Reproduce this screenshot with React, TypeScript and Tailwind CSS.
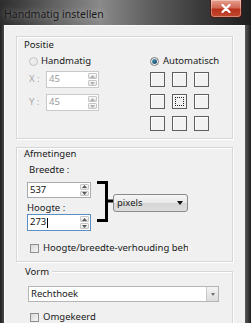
import React from "react";

function Arrow({ up, color = "#5a5a5a" }: { up?: boolean; color?: string }) {
  return (
    <svg width="5" height="3" viewBox="0 0 5 3">
      <path d={up ? "M0 3 L2.5 0 L5 3 Z" : "M0 0 L5 0 L2.5 3 Z"} fill={color} />
    </svg>
  );
}

function SpinInput({
  value,
  disabled,
  focused,
  width,
  height,
}: {
  value: string;
  disabled?: boolean;
  focused?: boolean;
  width: number;
  height: number;
}) {
  return (
    <div
      className={`flex items-stretch bg-white border ${
        focused ? "border-[#5b8fc4]" : disabled ? "border-[#c9c9c9]" : "border-[#a9abb0]"
      }`}
      style={{ width, height }}
    >
      <div
        className={`flex-1 flex items-center pl-[2px] text-[9.5px] ${
          disabled ? "text-[#9a9a9a]" : "text-[#111]"
        }`}
      >
        {value}
        {focused && <span className="w-[1px] h-[10px] bg-black ml-[1px]" />}
      </div>
      <div className="flex flex-col w-[10px] gap-[1px] py-[1px] pr-[1px]">
        <div className="flex-1 border border-[#c6c6c6] rounded-[1px] bg-gradient-to-b from-[#fbfbfb] to-[#e3e3e3] flex items-center justify-center">
          <Arrow up color={disabled ? "#b0b0b0" : "#5a5a5a"} />
        </div>
        <div className="flex-1 border border-[#c6c6c6] rounded-[1px] bg-gradient-to-b from-[#fbfbfb] to-[#e3e3e3] flex items-center justify-center">
          <Arrow color={disabled ? "#b0b0b0" : "#5a5a5a"} />
        </div>
      </div>
    </div>
  );
}

function Radio({ checked, disabled }: { checked?: boolean; disabled?: boolean }) {
  return (
    <div
      className={`shrink-0 w-[9px] h-[9px] rounded-full border flex items-center justify-center ${
        disabled ? "border-[#c2c2c2] bg-[#ececec]" : "border-[#7a7a7a] bg-gradient-to-br from-[#e4e4e4] to-[#ffffff]"
      }`}
    >
      {checked && (
        <div className="w-[5px] h-[5px] rounded-full bg-gradient-to-br from-[#5aa6c8] to-[#0c3e5c]" />
      )}
    </div>
  );
}

function Checkbox() {
  return (
    <div className="shrink-0 w-[9px] h-[9px] border border-[#8f8f8f] bg-gradient-to-br from-[#d8d8d8] to-[#f6f6f6]" />
  );
}

const panel =
  "w-[217px] border border-[#d6d6d6] shadow-[inset_1px_1px_0_#ffffff,1px_1px_0_#ffffff] flex flex-col";

export default function App() {
  return (
    <div className="w-[251px] h-[323px] overflow-hidden flex flex-col bg-[#2a2a2a] font-['Noto_Sans',sans-serif] text-[9.5px] text-[#1a1a1a]">
      {/* Title bar */}
      <div className="h-[25px] flex items-start bg-[linear-gradient(90deg,#2c2c2c_0%,#6a6a6a_25%,#8a8a8a_40%,#5e5e5e_60%,#3a3a3a_80%,#1e1e1e_100%)]">
        <div className="mt-[8px] ml-[4px] text-[10.5px] leading-[12px] text-[#1a1a1a] [text-shadow:0_0_6px_rgba(255,255,255,0.55)]">
          Handmatig instellen
        </div>
        <div className="flex-1" />
        <div className="mr-[9px] w-[32px] h-[18px] rounded-b-[4px] border border-t-0 border-[#4a1a14] bg-[linear-gradient(180deg,#e8a090_0%,#d06a55_45%,#b8321c_55%,#c24a30_100%)] flex items-center justify-center shadow-[inset_0_0_0_1px_rgba(255,255,255,0.35)]">
          <svg width="10" height="9" viewBox="0 0 10 9">
            <path d="M1.5 1 L8.5 8 M8.5 1 L1.5 8" stroke="#ffffff" strokeWidth="2.2" strokeLinecap="round" />
          </svg>
        </div>
      </div>

      {/* Body */}
      <div className="flex-1 flex">
        <div className="w-[4px] bg-[linear-gradient(90deg,#1e1e1e,#4a4a4a)]" />
        <div className="flex-1 bg-[#f0f0f0] border-t border-l border-[#fafafa] flex flex-col pl-[11px] pt-[10px]">
          {/* Positie */}
          <div className={`${panel} h-[103px]`}>
            <div className="h-[12px] leading-[12px] mt-[2px] ml-[7px]">Positie</div>
            <div className="flex mt-[4px]">
              <div className="ml-[12px] w-[100px] flex flex-col">
                <div className="h-[12px] flex items-center gap-[3px]">
                  <Radio disabled />
                  <span className="leading-[12px]">Handmatig</span>
                </div>
                <div className="h-[17px] mt-[4px] flex items-center">
                  <span className="w-[17px] text-[#a8a8a8]">X :</span>
                  <SpinInput value="45" disabled width={53} height={17} />
                </div>
                <div className="h-[17px] mt-[6px] flex items-center">
                  <span className="w-[17px] text-[#a8a8a8]">Y :</span>
                  <SpinInput value="45" disabled width={53} height={17} />
                </div>
              </div>
              <div className="ml-[21px] flex flex-col">
                <div className="h-[12px] flex items-center gap-[4px]">
                  <Radio checked />
                  <span className="leading-[12px]">Automatisch</span>
                </div>
                <div className="mt-[5px] grid grid-cols-[15px_15px_15px] grid-rows-[15px_15px_15px] gap-[7px]">
                  {Array.from({ length: 9 }).map((_, i) => (
                    <div
                      key={i}
                      className="border border-[#5e5e5e] bg-[#f2f2f2] shadow-[inset_1px_1px_0_#ffffff] flex items-center justify-center"
                    >
                      {i === 4 && <div className="w-[9px] h-[9px] border border-dotted border-[#222]" />}
                    </div>
                  ))}
                </div>
              </div>
            </div>
          </div>

          {/* Afmetingen */}
          <div className={`${panel} h-[115px] mt-[8px]`}>
            <div className="h-[12px] leading-[12px] ml-[7px]">Afmetingen</div>
            <div className="flex mt-[4px]">
              <div className="ml-[10px] w-[64px] flex flex-col">
                <div className="h-[12px] leading-[12px] pl-[2px]">Breedte :</div>
                <div className="mt-[6px]">
                  <SpinInput value="537" width={64} height={16} />
                </div>
                <div className="h-[12px] leading-[12px] mt-[4px]">Hoogte :</div>
                <SpinInput value="273" focused width={64} height={17} />
              </div>
              <svg className="mt-[17px] ml-[6px]" width="16" height="41" viewBox="0 0 16 41">
                <path d="M0 1.5 H9.5 V39.5 H0 M9.5 20 H16" stroke="#000" strokeWidth="3" fill="none" />
              </svg>
              <div className="mt-[30px] w-[75px] h-[18px] rounded-[3px] border border-[#8a8a8a] bg-[linear-gradient(180deg,#f6f6f6_0%,#e8e8e8_50%,#d6d6d6_51%,#dedede_100%)] flex items-center pl-[3px] pr-[4px]">
                <span className="flex-1">pixels</span>
                <svg width="6" height="4" viewBox="0 0 6 4">
                  <path d="M0 0 H6 L3 4 Z" fill="#111" />
                </svg>
              </div>
            </div>
            <div className="mt-[11px] ml-[13px] h-[12px] flex items-center gap-[4px] w-[158px] overflow-hidden whitespace-nowrap">
              <Checkbox />
              <span className="leading-[12px]">Hoogte/breedte-verhouding behouden</span>
            </div>
          </div>

          {/* Vorm */}
          <div className="flex items-center mt-[4px] h-[12px] w-[217px]">
            <span className="ml-[9px] leading-[12px]">Vorm</span>
            <div className="ml-[3px] flex-1 h-[2px] border-t border-[#d6d6d6] border-b border-b-white" />
          </div>
          <div className="w-[217px] flex-1 border-r border-[#d6d6d6] shadow-[1px_0_0_#ffffff] flex flex-col -mt-[6px] pt-[6px]">
            <div className="ml-[12px] mt-[8px] w-[191px] h-[16px] bg-white border border-[#b5b5b5] flex items-stretch">
              <span className="flex-1 pl-[2px] leading-[14px]">Rechthoek</span>
              <div className="w-[12px] border-l border-[#c8c8c8] bg-gradient-to-b from-[#f4f4f4] to-[#dcdcdc] flex items-center justify-center">
                <svg width="4" height="3" viewBox="0 0 4 3">
                  <path d="M0 0 H4 L2 3 Z" fill="#707070" />
                </svg>
              </div>
            </div>
            <div className="ml-[14px] mt-[9px] h-[12px] flex items-center gap-[4px]">
              <Checkbox />
              <span className="leading-[12px]">Omgekeerd</span>
            </div>
          </div>
        </div>
        <div className="w-[6px] bg-[linear-gradient(90deg,#5a5a5a,#1e1e1e)]" />
      </div>
    </div>
  );
}
